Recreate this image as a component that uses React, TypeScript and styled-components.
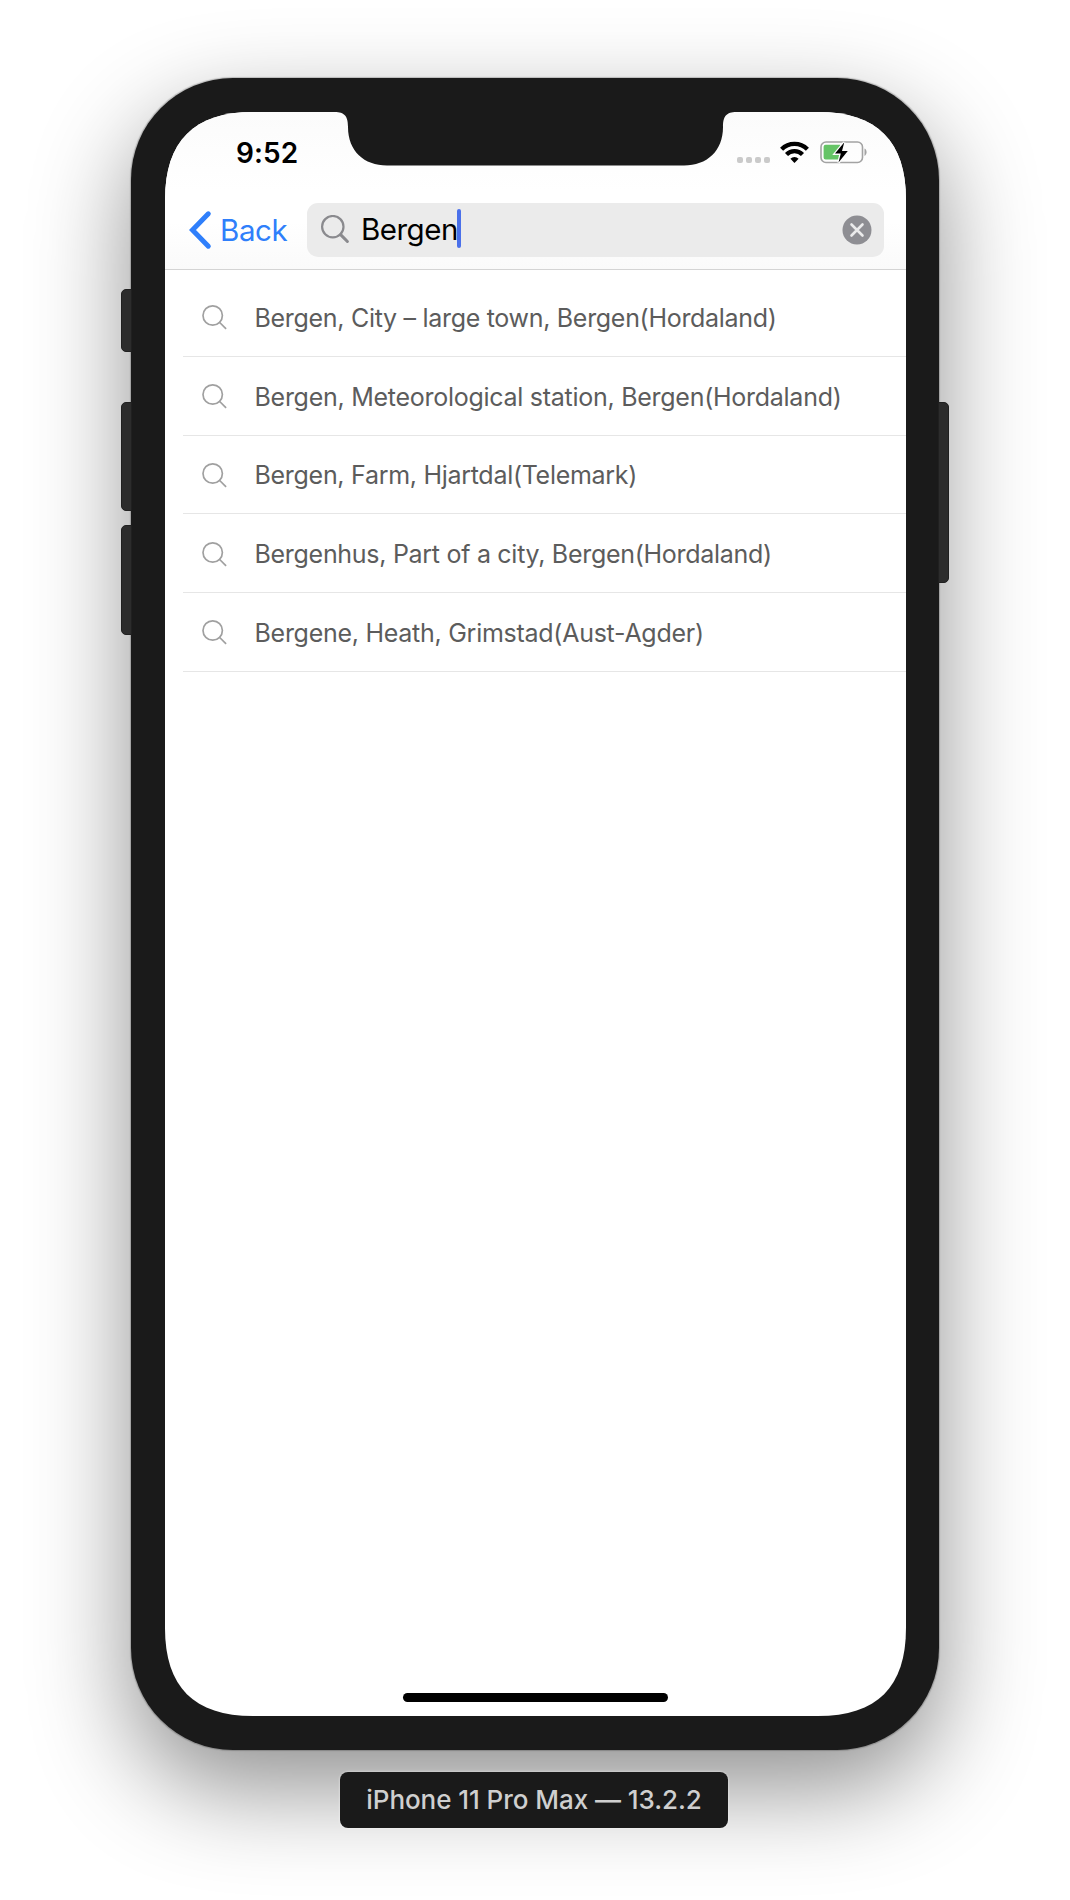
import React from "react";
import styled, { createGlobalStyle } from "styled-components";

const GlobalStyle = createGlobalStyle`
  * { box-sizing: border-box; }
  body {
    margin: 0;
    background: #fff;
    font-family: Inter, "Liberation Sans", sans-serif;
  }
`;

const Stage = styled.main`
  width: 1070px;
  height: 1900px;
  padding: 78px 0 0 131px;
  overflow: hidden;
  background: #fff;
`;

const Phone = styled.div`
  position: relative;
  width: 808px;
  height: 1672px;
  padding: 34px 33px 34px 34px;
  border-radius: 102px;
  background: #1a1a1a;
  box-shadow: 0 0 1px 0.5px rgba(0, 0, 0, 0.2), 0 38px 98px rgba(0, 0, 0, 0.44);
`;

const SideButton = styled.span<{ $side: "left" | "right"; $top: number; $height: number }>`
  position: absolute;
  top: ${(p) => p.$top}px;
  ${(p) => p.$side}: -10px;
  width: 11px;
  height: ${(p) => p.$height}px;
  border: 1px solid #202020;
  border-radius: ${(p) => (p.$side === "left" ? "5px 0 0 5px" : "0 5px 5px 0")};
  background: #2c2c2c;
`;

/* Continuous-curvature corners, 88px long on each side. */
const Screen = styled.div`
  position: relative;
  display: flex;
  flex-direction: column;
  width: 741px;
  height: 1604px;
  clip-path: path("M0 88C0 29 29 0 88 0H653C712 0 741 29 741 88V1516C741 1575 712 1604 653 1604H88C29 1604 0 1575 0 1516Z");
  background: #fff;
`;

const Notch = styled.svg`
  position: absolute;
  top: 0;
  left: 168px;
  width: 405px;
  height: 54px;
`;

const Header = styled.header`
  height: 158px;
  border-bottom: 1px solid #d4d4d4;
  background: linear-gradient(#fbfbfb, #fff 50%, #fff 70%, #fafafa);
`;

const StatusBar = styled.div`
  display: flex;
  align-items: center;
  height: 81px;
  padding: 0 38px 0 71px;
`;

const Clock = styled.span`
  flex: 1;
  font-size: 28px;
  font-weight: 600;
  line-height: 34px;
  letter-spacing: 0.1px;
  color: #000;
`;

const Signal = styled.span`
  display: flex;
  gap: 3px;
  margin: 14px 10.5px 0 0;
`;

const Dot = styled.i`
  width: 6px;
  height: 6px;
  border-radius: 2px;
  background: #cacaca;
`;

const WifiIcon = styled.svg`
  width: 29px;
  height: 22px;
  margin: 0 11px 2px 0;
`;

const BatteryIcon = styled.svg`
  width: 48px;
  height: 24px;
  margin-bottom: 2px;
`;

const NavBar = styled.nav`
  display: flex;
  align-items: center;
  height: 74px;
  padding: 0 22px 0 23px;
`;

const BackButton = styled.a`
  display: flex;
  align-items: center;
  gap: 7px;
  width: 118.5px;
  color: #2f7ffb;
  font-size: 29.5px;
  line-height: 38px;
`;

const BackLabel = styled.span`
  letter-spacing: -0.4px;
`;

const SearchField = styled.div`
  display: flex;
  align-items: center;
  width: 577.5px;
  height: 54px;
  padding: 0 12px 0 13px;
  border-radius: 11px;
  background: #ebebeb;
`;

const Query = styled.span`
  margin: 0 0 2px 11.5px;
  font-size: 29.5px;
  line-height: 38px;
  letter-spacing: -0.5px;
  color: #000;
`;

const Caret = styled.span`
  width: 4px;
  height: 39px;
  margin: 0 auto 3px -1px;
  border-radius: 2px;
  background: #4a70ea;
`;

const Results = styled.ul`
  margin: 0;
  padding: 8px 0 0 18px;
  list-style: none;
`;

const ResultRow = styled.li`
  display: flex;
  align-items: center;
  height: 78.75px;
  padding: 1px 0 0 19px;
  border-bottom: 1px solid #e6e6e6;
`;

const ResultText = styled.span<{ $tracking: number }>`
  margin: 1px 0 0 26.5px;
  font-size: 25px;
  line-height: 32px;
  letter-spacing: ${(p) => p.$tracking}px;
  white-space: nowrap;
  color: #5c5c5c;
`;

const HomeIndicator = styled.div`
  width: 265px;
  height: 9px;
  margin: auto auto 14.5px 238px;
  border-radius: 5px;
  background: #000;
`;

const DeviceLabel = styled.div`
  position: relative;
  display: flex;
  align-items: center;
  justify-content: center;
  width: 388px;
  height: 56px;
  margin: 22px 0 0 209px;
  padding-bottom: 2px;
  border-radius: 8px;
  background: #1a1a1a;
  box-shadow: 0 0 2px 1px rgba(255, 255, 255, 0.3);
  color: #cfcfcf;
  font-size: 26px;
  font-weight: 500;
  letter-spacing: -0.06px;
  white-space: nowrap;
`;

const results = [
  { text: "Bergen, City – large town, Bergen(Hordaland)", tracking: -0.3 },
  { text: "Bergen, Meteorological station, Bergen(Hordaland)", tracking: -0.27 },
  { text: "Bergen, Farm, Hjartdal(Telemark)", tracking: -0.29 },
  { text: "Bergenhus, Part of a city, Bergen(Hordaland)", tracking: -0.29 },
  { text: "Bergene, Heath, Grimstad(Aust-Agder)", tracking: -0.27 },
];

const sideButtons = [
  { side: "left", top: 211, height: 63 },
  { side: "left", top: 324, height: 109 },
  { side: "left", top: 447, height: 110 },
  { side: "right", top: 324, height: 181 },
] as const;

export default function App() {
  return (
    <Stage>
      <GlobalStyle />
      <Phone>
        {sideButtons.map((b) => (
          <SideButton key={b.side + b.top} $side={b.side} $top={b.top} $height={b.height} />
        ))}
        <Screen>
          <Header>
            <StatusBar>
              <Clock>9:52</Clock>
              <Signal>
                <Dot />
                <Dot />
                <Dot />
                <Dot />
              </Signal>
              <WifiIcon viewBox="0 0 29 22" fill="none" stroke="#000" strokeWidth="4.3">
                <path d="M1.6 8.2a18.2 18.2 0 0 1 25.8 0" />
                <path d="M6.5 13.4a11.3 11.3 0 0 1 16 0" />
                <path d="M14.5 21.9l-4.1-4.200a5.800 5.800 0 0 1 8.200 0z" fill="#000" stroke="none" />
              </WifiIcon>
              <BatteryIcon viewBox="0 0 48 24">
                <rect x="1" y="2" width="41.5" height="20.5" rx="5" fill="none" stroke="#a3a3a3" strokeWidth="1.6" />
                <path d="M44.5 8.6c2.8 1.2 2.8 6.1 0 7.3z" fill="#a3a3a3" />
                <path d="M5.6 4.8H20v14.8H5.6a2 2 0 0 1-2-2V6.8a2 2 0 0 1 2-2z" fill="#65c466" />
                <path
                  d="M24.3 2.3l-9.3 11.3h5.8l-2.3 8.9 9.3-11.6H22z"
                  fill="#000"
                  stroke="#fcfcfc"
                  strokeWidth="2.6"
                  paintOrder="stroke"
                />
              </BatteryIcon>
            </StatusBar>
            <NavBar>
              <BackButton>
                <svg width="25" height="40" viewBox="0 0 25 40" fill="none" stroke="currentColor" strokeWidth="5" strokeLinecap="round" strokeLinejoin="miter">
                  <path d="M20.3 3.8L4.5 20l15.8 16.2" />
                </svg>
                <BackLabel>Back</BackLabel>
              </BackButton>
              <SearchField>
                <svg width="30" height="30" viewBox="0 0 30 30" fill="none" stroke="#8a8a8e" strokeLinecap="round">
                  <circle cx="12.8" cy="11.7" r="10.7" strokeWidth="2.2" />
                  <path d="M20.6 19.6l6.8 6.9" strokeWidth="3" />
                </svg>
                <Query>Bergen</Query>
                <Caret />
                <svg width="30" height="30" viewBox="0 0 30 30">
                  <circle cx="15" cy="15" r="14.5" fill="#8e8e93" />
                  <path d="M9.5 9.5l11 11M20.5 9.5l-11 11" stroke="#ebebeb" strokeWidth="2.6" strokeLinecap="round" />
                </svg>
              </SearchField>
            </NavBar>
          </Header>
          <Results>
            {results.map((r) => (
              <ResultRow key={r.text}>
                <svg width="26" height="28" viewBox="0 0 26 28" fill="none" stroke="#a0a0a0" strokeWidth="1.7">
                  <circle cx="10.7" cy="12.5" r="9.7" />
                  <path d="M17.2 19l6.9 6.9" />
                </svg>
                <ResultText $tracking={r.tracking}>{r.text}</ResultText>
              </ResultRow>
            ))}
          </Results>
          <HomeIndicator />
          <Notch viewBox="0 0 405 54">
            <path
              d="M0 0H405C395 0 390 2 390 15C390 39 374 53.5 351 53.5H54C31 53.5 15 39 15 15C15 2 10 0 0 0Z"
              fill="#1a1a1a"
            />
          </Notch>
        </Screen>
      </Phone>
      <DeviceLabel>iPhone 11 Pro Max — 13.2.2</DeviceLabel>
    </Stage>
  );
}
